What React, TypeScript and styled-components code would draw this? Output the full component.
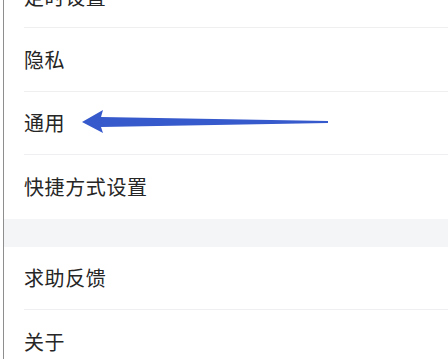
import React from "react";
import styled, { createGlobalStyle } from "styled-components";

const Global = createGlobalStyle`
  html, body { margin: 0; padding: 0; background: #ffffff; }
  body { font-family: "Noto Sans CJK SC", "Noto Sans", sans-serif; }
`;

const Page = styled.div`
  position: relative;
  width: 448px;
  height: 359px;
  overflow: hidden;
  background: #ffffff;
  padding-left: 3px;
  box-sizing: border-box;
`;

const Frame = styled.div`
  border-left: 1px solid #8e8e8e;
  height: calc(100% + 35px);
  display: flex;
  flex-direction: column;
  margin-top: -35px;
`;

const Group = styled.div`
  display: flex;
  flex-direction: column;
  flex-shrink: 0;
  background: #ffffff;
`;

const Row = styled.div<{ $last?: boolean }>`
  height: 63.4px;
  flex-shrink: 0;
  display: flex;
  align-items: center;
  margin-left: 20px;
  box-sizing: border-box;
  border-bottom: ${(p) => (p.$last ? "none" : "1px solid #efeff1")};
  font-size: 20px;
  color: #262626;
  letter-spacing: 0.6px;
`;

const Spacer = styled.div`
  height: 28px;
  flex-shrink: 0;
  background: #f4f5f7;
`;

const Arrow = styled.svg`
  position: absolute;
  left: 80px;
  top: 108px;
`;

export default function App() {
  return (
    <>
      <Global />
      <Page>
        <Frame>
          <Group>
            <Row>定时设置</Row>
            <Row>隐私</Row>
            <Row>通用</Row>
            <Row $last>快捷方式设置</Row>
          </Group>
          <Spacer />
          <Group>
            <Row>求助反馈</Row>
            <Row $last>关于</Row>
          </Group>
        </Frame>
        <Arrow width="252" height="28" viewBox="0 0 252 28">
          <path
            d="M2 14 L23 2 L21 9 L248 13 L248 15 L21 19 L23 25 Z"
            fill="#3659cc"
          />
        </Arrow>
      </Page>
    </>
  );
}
